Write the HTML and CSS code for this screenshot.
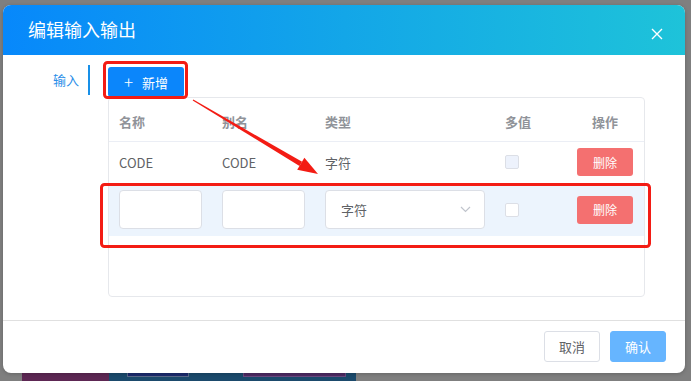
FILE: index.html
```html
<!DOCTYPE html>
<html lang="zh">
<head>
<meta charset="utf-8">
<title>编辑输入输出</title>
<link rel="stylesheet" href="styles.css">
</head>
<body>
<div class="backdrop">
  <div class="strip strip-purple"></div>
  <div class="strip strip-teal">
    <div class="blk blk-navy"></div>
    <div class="blk blk-violet"></div>
  </div>
</div>

<div class="dialog">
  <div class="dlg-header">
    <span class="dlg-title">编辑输入输出</span>
    <svg class="dlg-close" width="12" height="12" viewBox="0 0 12 12"><path d="M1 1L11 11M11 1L1 11" stroke="#fff" stroke-width="1.4" fill="none"/></svg>
  </div>
  <div class="dlg-body">
    <div class="tabs">
      <div class="tab active">输入</div>
    </div>
    <div class="content">
      <button class="btn-add"><span class="plus">+</span>新增</button>
      <div class="table">
        <div class="tr th">
          <div class="td">名称</div>
          <div class="td">别名</div>
          <div class="td">类型</div>
          <div class="td">多值</div>
          <div class="td center">操作</div>
        </div>
        <div class="tr row1">
          <div class="td">CODE</div>
          <div class="td">CODE</div>
          <div class="td">字符</div>
          <div class="td"><span class="chk disabled"></span></div>
          <div class="td"><button class="btn-del">删除</button></div>
        </div>
        <div class="tr row-edit">
          <div class="td"><div class="inp"></div></div>
          <div class="td"><div class="inp"></div></div>
          <div class="td"><div class="sel"><span>字符</span><svg width="11" height="7" viewBox="0 0 11 7"><path d="M1 1L5.5 5.5L10 1" stroke="#c0c4cc" stroke-width="1.2" fill="none"/></svg></div></div>
          <div class="td"><span class="chk"></span></div>
          <div class="td"><button class="btn-del">删除</button></div>
        </div>
      </div>
    </div>
  </div>
  <div class="dlg-footer">
    <button class="btn btn-cancel">取消</button>
    <button class="btn btn-ok">确认</button>
  </div>
</div>

<svg class="annot" width="691" height="381" viewBox="0 0 691 381">
  <rect x="104.5" y="62.5" width="82" height="35" rx="3" fill="none" stroke="#f31c14" stroke-width="3"/>
  <rect x="101.5" y="184.5" width="548" height="62" rx="3" fill="none" stroke="#f31c14" stroke-width="3"/>
  <polygon points="192.7,100.4 193.3,99.6 302.1,161.7 299.5,166" fill="#f31c14"/>
  <polygon points="318,174 297.2,169.8 304.4,157.8" fill="#f31c14"/>
</svg>
</body>
</html>
```

FILE: styles.css
```css
* { box-sizing: border-box; }
html, body {
  margin: 0;
  padding: 0;
}
body {
  width: 691px;
  height: 381px;
  overflow: hidden;
  background: #7f7f7f;
  font-family: "Noto Sans CJK SC", "Noto Sans", sans-serif;
  position: relative;
}

.backdrop {
  position: absolute;
  left: 22px;
  top: 366px;
  display: flex;
  height: 15px;
}
.strip { height: 15px; }
.strip-purple { width: 87px; background: #5d2753; }
.strip-teal {
  width: 247px;
  background: #1b4a6c;
  display: flex;
  align-items: flex-start;
  padding-left: 18px;
  gap: 54px;
}
.blk { height: 11px; border: 1px solid #5a6a8a; border-top: none; }
.blk-navy { width: 62px; background: #1b2a6e; }
.blk-violet { width: 103px; background: #4e2a63; border-color: #6a4a80; }

.dialog {
  position: absolute;
  left: 3px;
  top: 5px;
  width: 682px;
  height: 368px;
  background: #fff;
  border-radius: 8px;
  overflow: hidden;
  display: flex;
  flex-direction: column;
  box-shadow: 0 1px 4px rgba(0,0,0,0.2);
}

.dlg-header {
  height: 50px;
  flex: none;
  background: linear-gradient(90deg, #0788fb 0%, #13a6e8 50%, #1ec3d9 100%);
  display: flex;
  align-items: center;
  justify-content: space-between;
  padding: 0 22px 0 25px;
}
.dlg-title {
  color: #fff;
  font-size: 18px;
  line-height: 24px;
  margin-top: -2px;
}
.dlg-close { margin-top: 8px; }

.dlg-body {
  height: 266px;
  flex: none;
  display: flex;
  border-bottom: 1px solid #e0e0e0;
}

.tabs {
  width: 87px;
  flex: none;
  padding-top: 10px;
}
.tab {
  height: 30px;
  line-height: 30px;
  font-size: 13px;
  text-align: right;
  padding-right: 9px;
  color: #2a8ee8;
  border-right: 2px solid #1890e8;
}

.content {
  margin-left: 18px;
  padding-top: 12px;
  display: flex;
  flex-direction: column;
  align-items: flex-start;
}

.btn-add {
  width: 76px;
  height: 30px;
  border: none;
  border-radius: 3px;
  background: #0b86fb;
  color: #fff;
  font-family: inherit;
  font-size: 13px;
  padding: 0;
  display: flex;
  align-items: center;
  justify-content: center;
}
.btn-add .plus {
  font-size: 17px;
  font-weight: 300;
  line-height: 1;
  margin-right: 9px;
  margin-top: -2px;
}

.table {
  width: 537px;
  height: 200px;
  border: 1px solid #e6e8ec;
  border-radius: 4px;
  padding: 0 11px 0 10px;
}
.tr {
  display: grid;
  grid-template-columns: 103px 103px 180px 72px 56px;
  align-items: center;
  font-size: 13px;
  color: #606266;
  margin: 0 -11px 0 -10px;
  padding: 0 11px 0 10px;
}
.th {
  height: 44px;
  color: #909399;
  font-weight: 600;
  border-bottom: 1px solid #ebeef5;
  padding-top: 4px;
}
.row1 {
  height: 44px;
  padding-bottom: 4px;
}
.row-edit {
  height: 50px;
  background: #ecf4fd;
  padding-top: 4px;
  padding-bottom: 7px;
}
.center { text-align: center; }

.chk {
  display: block;
  width: 14px;
  height: 14px;
  border: 1px solid #dcdfe6;
  border-radius: 2px;
  background: #fff;
}
.chk.disabled { background: #edf2fc; }

.btn-del {
  width: 56px;
  height: 28px;
  border: none;
  border-radius: 3px;
  background: #f47070;
  color: #fff;
  font-family: inherit;
  font-size: 12px;
  padding: 0;
}

.inp {
  width: 83px;
  height: 39px;
  background: #fff;
  border: 1px solid #dcdfe6;
  border-radius: 4px;
}
.sel {
  width: 160px;
  height: 39px;
  background: #fff;
  border: 1px solid #dcdfe6;
  border-radius: 4px;
  display: flex;
  align-items: center;
  justify-content: space-between;
  padding: 0 13px 0 15px;
  color: #606266;
  font-size: 13px;
}

.dlg-footer {
  flex: 1;
  display: flex;
  justify-content: flex-end;
  align-items: flex-start;
  padding: 10px 19px 0 0;
  gap: 10px;
}
.btn {
  width: 56px;
  height: 31px;
  border-radius: 3px;
  font-family: inherit;
  font-size: 13px;
  padding: 0;
}
.btn-cancel {
  background: #fff;
  border: 1px solid #dcdfe6;
  color: #606266;
}
.btn-ok {
  background: #66b5ff;
  border: 1px solid #66b5ff;
  color: #fff;
}

.annot {
  position: absolute;
  left: 0;
  top: 0;
  pointer-events: none;
}
```
